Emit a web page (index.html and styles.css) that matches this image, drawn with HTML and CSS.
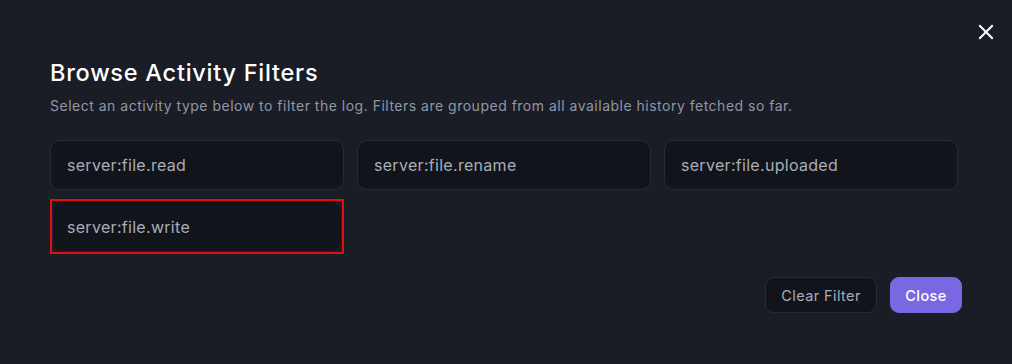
FILE: index.html
```html
<!DOCTYPE html>
<html lang="en">
<head>
    <meta charset="UTF-8">
    <title>Browse Activity Filters</title>
    <link rel="stylesheet" href="styles.css">
</head>
<body>
    <div class="modal">
        <button class="close-x" aria-label="Close">
            <svg width="16" height="16" viewBox="0 0 16 16"><path d="M2 2L14 14M14 2L2 14" stroke="#fff" stroke-width="2" stroke-linecap="square"/></svg>
        </button>
        <h2 class="title">Browse Activity Filters</h2>
        <p class="subtitle">Select an activity type below to filter the log. Filters are grouped from all available history fetched so far.</p>

        <div class="filter-grid">
            <div class="filter-cell"><button class="filter">server:file.read</button></div>
            <div class="filter-cell"><button class="filter">server:file.rename</button></div>
            <div class="filter-cell"><button class="filter">server:file.uploaded</button></div>
            <div class="filter-cell selected"><button class="filter">server:file.write</button></div>
        </div>

        <div class="actions">
            <button class="btn secondary">Clear Filter</button>
            <button class="btn primary">Close</button>
        </div>
    </div>
</body>
</html>
```

FILE: styles.css
```css
body {
    margin: 0;
    background-color: #1a1d26;
    font-family: Inter, "Open Sans", sans-serif;
    height: 364px;
    overflow: hidden;
}

.modal {
    position: relative;
    padding: 56px 50px 0 50px;
}

.close-x {
    position: absolute;
    top: 24px;
    right: 18px;
    background: none;
    border: 0;
    padding: 0;
    width: 16px;
    height: 16px;
    cursor: pointer;
}

.title {
    margin: 0;
    font-size: 23.5px;
    font-weight: 500;
    letter-spacing: 0.75px;
    color: #fff;
    line-height: 34px;
}

.subtitle {
    margin: 6px 0 0;
    font-size: 14px;
    letter-spacing: 0.5px;
    color: #9097a4;
    line-height: 20px;
}

.filter-grid {
    display: grid;
    grid-template-columns: repeat(3, 294px);
    column-gap: 13px;
    row-gap: 9px;
    margin-top: 23px;
}

.filter-cell {
    padding: 1px 0;
}

.filter-cell.selected {
    padding: 0;
    border: 2px solid #e01010;
    margin-top: -1px;
}

.filter {
    display: block;
    width: 100%;
    height: 50px;
    background-color: #12141b;
    border: 1px solid #262a35;
    border-radius: 10px;
    color: #a8adb7;
    font-family: inherit;
    font-size: 16px;
    letter-spacing: 0.3px;
    text-align: left;
    padding: 0 16px;
    cursor: pointer;
}

.selected .filter {
    width: 290px;
    height: 51px;
    padding: 0 14px;
    border-color: #1e222c;
}

.actions {
    display: flex;
    justify-content: flex-end;
    gap: 13px;
    margin-top: 23px;
}

.btn {
    height: 36px;
    border-radius: 9px;
    font-family: inherit;
    font-size: 14.5px;
    letter-spacing: 0.4px;
    padding: 0;
    white-space: nowrap;
    cursor: pointer;
}

.btn.secondary {
    width: 112px;
    background-color: #12141b;
    border: 1px solid #262a35;
    color: #a8adb7;
}

.btn.primary {
    width: 72px;
    background-color: #7a68e3;
    border: 1px solid #7a68e3;
    color: #fff;
    font-weight: 500;
}
```
